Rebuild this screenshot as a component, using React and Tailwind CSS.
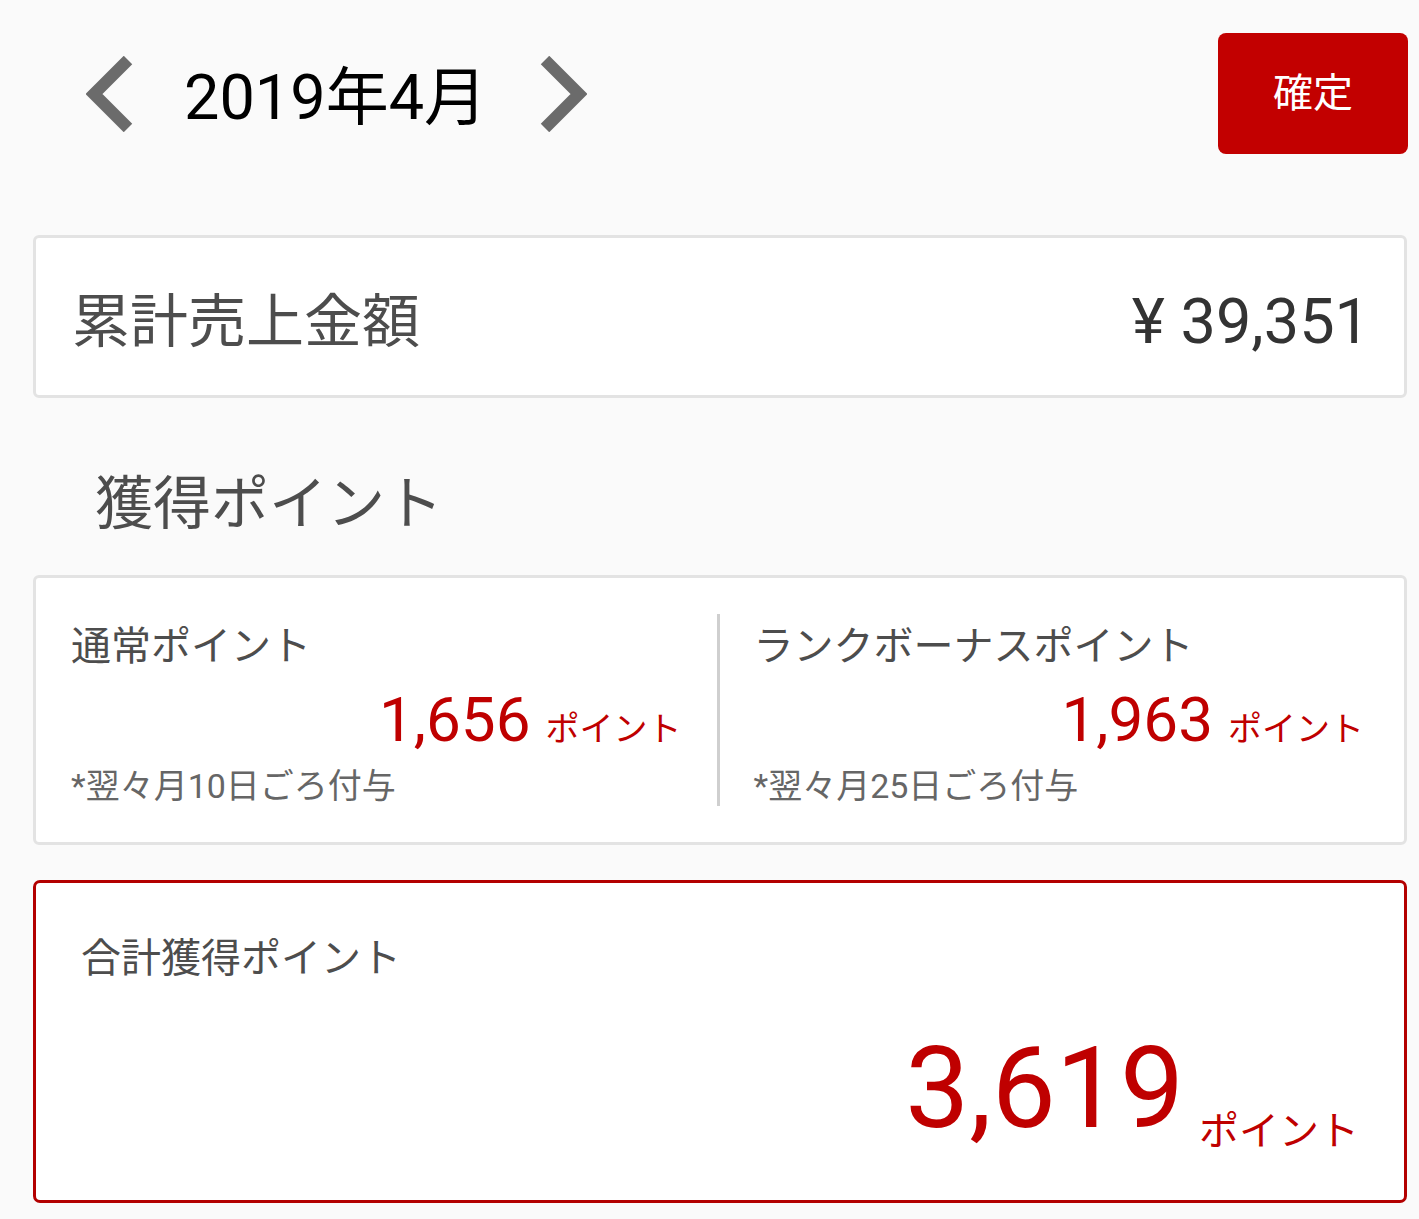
import React from "react";

const FONT = { fontFamily: "Roboto, 'Noto Sans CJK JP', sans-serif" };

function Chevron({ dir }) {
  const pts = dir === "left" ? "42,4 8,38 42,72" : "8,4 42,38 8,72";
  return (
    <svg width="50" height="76" viewBox="0 0 50 76" className="shrink-0">
      <polyline points={pts} fill="none" stroke="#6b6b6b" strokeWidth="12" strokeLinejoin="miter" strokeLinecap="butt" />
    </svg>
  );
}

function PointCol({ title, value, note, className }) {
  return (
    <div className={"flex-1 flex flex-col " + className}>
      <div className="text-[40px] leading-[40px] h-[40px] mt-[13px] text-[#4d4d4d] whitespace-nowrap">{title}</div>
      <div className="flex justify-end items-baseline mt-[22px] h-[62px]">
        <span className="text-[62px] leading-[62px] text-[#bf0000]">{value}</span>
        <span className="text-[34px] leading-[34px] ml-[15px] text-[#bf0000]">ポイント</span>
      </div>
      <div className="text-[34px] leading-[34px] mt-[18px] text-[#666666] whitespace-nowrap">{note}</div>
    </div>
  );
}

export default function App() {
  return (
    <div style={FONT} className="w-[1419px] h-[1219px] overflow-hidden bg-[#fafafa] pl-[33px] pr-[11px]">
      {/* header */}
      <div className="flex items-center justify-between pt-[33px] h-[154px]">
        <div className="flex items-center ml-[53px]">
          <Chevron dir="left" />
          <span className="text-[63px] leading-[63px] text-black ml-[48px] mt-[8px] whitespace-nowrap">2019年4月</span>
          <div className="ml-[50px]">
            <Chevron dir="right" />
          </div>
        </div>
        <button className="w-[190px] h-[121px] rounded-[8px] bg-[#c20000] text-white text-[40px] leading-[40px]">確定</button>
      </div>

      {/* 累計売上金額 */}
      <div className="mt-[81px] mr-[1px] h-[163px] bg-white border-[3px] border-[#e3e3e3] rounded-[6px] flex items-center justify-between pl-[36px] pr-[34px] pt-[10px]">
        <span className="text-[58px] leading-[58px] text-[#4d4d4d]">累計売上金額</span>
        <span className="text-[63px] leading-[63px] text-[#333333]">¥ 39,351</span>
      </div>

      {/* section title */}
      <div className="mt-[77px] ml-[62px] h-[58px] text-[58px] leading-[58px] text-[#4d4d4d]">獲得ポイント</div>

      {/* 通常 / ランク */}
      <div className="mt-[42px] mr-[1px] h-[270px] bg-white border-[3px] border-[#e3e3e3] rounded-[6px] flex py-[36px]">
        <PointCol className="pl-[35px] pr-[35px]" title="通常ポイント" value="1,656" note="*翌々月10日ごろ付与" />
        <div className="w-[3px] bg-[#cfcfcf] shrink-0" />
        <PointCol className="pl-[34px] pr-[40px]" title="ランクボーナスポイント" value="1,963" note="*翌々月25日ごろ付与" />
      </div>

      {/* 合計 */}
      <div className="mt-[35px] mr-[1px] h-[323px] bg-white border-[3px] border-[#b30000] rounded-[7px] flex flex-col pl-[45px] pr-[45px] pt-[56px]">
        <div className="text-[40px] leading-[40px] h-[40px] text-[#4d4d4d]">合計獲得ポイント</div>
        <div className="flex justify-end items-end mt-[52px]">
          <span className="text-[114px] leading-[114px] text-[#bf0000]">3,619</span>
          <span className="text-[40px] leading-[40px] ml-[15px] mb-[-7px] text-[#bf0000]">ポイント</span>
        </div>
      </div>
    </div>
  );
}
